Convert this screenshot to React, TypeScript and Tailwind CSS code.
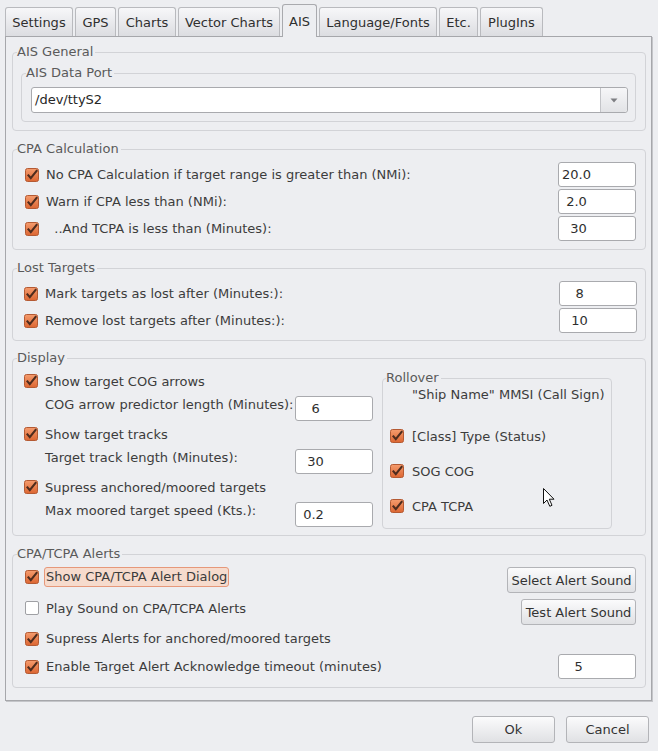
import React from "react";

const Check = ({ on = true }: { on?: boolean }) =>
  on ? (
    <svg width="14" height="14" viewBox="0 0 14 14" className="shrink-0 overflow-visible">
      <defs>
        <linearGradient id="cbFill" x1="0" y1="0" x2="0" y2="1">
          <stop offset="0" stopColor="#f59c6e" />
          <stop offset="1" stopColor="#dc6632" />
        </linearGradient>
      </defs>
      <rect x="0.5" y="0.5" width="13" height="13" rx="2" fill="url(#cbFill)" stroke="#b45a33" />
      <path d="M2.8 6.6 L5.8 10.2 L12.2 2.2" fill="none" stroke="#4e2c1e" strokeWidth="2.1" />
    </svg>
  ) : (
    <span className="block w-[14px] h-[14px] shrink-0 rounded-[2px] border border-[#9fa0a4] bg-white" />
  );

const CheckRow = ({
  label,
  on = true,
  className = "",
}: {
  label: string;
  on?: boolean;
  className?: string;
}) => (
  <div className={`flex items-center gap-[7px] ${className}`}>
    <Check on={on} />
    <span className="whitespace-pre leading-[15px]">{label}</span>
  </div>
);

const Field = ({ value, className = "" }: { value: string; className?: string }) => (
  <div
    className={`w-[78px] h-[25px] shrink-0 bg-white border border-[#a9aaae] rounded-[3px] pl-[3px] leading-[23px] whitespace-pre text-[#2e2e2e] ${className}`}
  >
    {value}
  </div>
);

const Btn = ({ children, className = "" }: { children: React.ReactNode; className?: string }) => (
  <div
    className={`flex items-center justify-center shrink-0 border border-[#b3b4b8] rounded-[3px] bg-linear-to-b from-[#fbfbfc] to-[#e0e1e4] text-[#333] ${className}`}
  >
    {children}
  </div>
);

const Group = ({
  title,
  className = "",
  titleClass = "ml-[4px]",
  children,
}: {
  title: string;
  className?: string;
  titleClass?: string;
  children?: React.ReactNode;
}) => (
  <div className={`border border-[#d2d3d7] rounded-[4px] ${className}`}>
    <div className={`-mt-[9px] ${titleClass} pr-[2px] w-fit h-[15px] leading-[15px] bg-[#edeef1] text-[#5a5a5a]`}>
      {title}
    </div>
    {children}
  </div>
);

const tabs: [string, number][] = [
  ["Settings", 68],
  ["GPS", 41],
  ["Charts", 58],
  ["Vector Charts", 102],
  ["AIS", 35],
  ["Language/Fonts", 118],
  ["Etc.", 39],
  ["PlugIns", 63],
];

const tabWidth: Record<number, string> = {
  68: "w-[68px]",
  41: "w-[41px]",
  58: "w-[58px]",
  102: "w-[102px]",
  35: "w-[35px]",
  118: "w-[118px]",
  39: "w-[39px]",
  63: "w-[63px]",
};

const cpaRows = [
  { label: "No CPA Calculation if target range is greater than (NMi):", value: "20.0" },
  { label: "Warn if CPA less than (NMi):", value: " 2.0" },
  { label: "  ..And TCPA is less than (Minutes):", value: "  30" },
];

const lostRows = [
  { label: "Mark targets as lost after (Minutes:):", value: "   8" },
  { label: "Remove lost targets after (Minutes:):", value: "  10" },
];

const displayBlocks = [
  { check: "Show target COG arrows", label: "COG arrow predictor length (Minutes):", value: "   6" },
  { check: "Show target tracks", label: "Target track length (Minutes):", value: "  30" },
  { check: "Supress anchored/moored targets", label: "Max moored target speed (Kts.):", value: " 0.2" },
];

export default function App() {
  return (
    <div className="relative w-[658px] h-[751px] overflow-hidden bg-[#edeef1] pt-[4px] font-['DejaVu_Sans',sans-serif] text-[13px] leading-[15px] text-[#3c3c3c]">
      {/* tabs */}
      <div className="flex items-end gap-[2px] pl-[5px]">
        {tabs.map(([t, w]) =>
          t === "AIS" ? (
            <div
              key={t}
              className={`relative z-10 -mb-px h-[33px] ${tabWidth[w]} flex items-center justify-center border border-b-0 border-[#a9aaae] rounded-t-[3px] bg-[#edeef1] text-[#2f2f2f]`}
            >
              {t}
            </div>
          ) : (
            <div
              key={t}
              className={`h-[29px] ${tabWidth[w]} flex items-center justify-center border border-b-0 border-[#b9babe] rounded-t-[3px] bg-linear-to-b from-[#f7f7f9] to-[#dcdde1] text-[#2f2f2f]`}
            >
              {t}
            </div>
          )
        )}
      </div>

      {/* notebook page */}
      <div className="ml-[5px] w-[647px] h-[665px] border border-[#a6a7ab] shadow-[1px_1px_0_#c4c5c9] pl-[6px] pr-[5px] pt-[15px]">
        <Group title="AIS General" className="h-[79px]">
          <div className="mt-[14px] ml-[8px] mr-[9px]">
            <Group title="AIS Data Port" className="h-[49px]">
              <div className="mt-[7px] ml-[9px] mr-[7px] h-[26px] flex bg-white border border-[#a9aaae] rounded-[3px]">
                <div className="flex-1 pl-[3px] leading-[24px] text-[#262626]">/dev/ttyS2</div>
                <div className="w-[27px] flex items-center justify-center border-l border-[#c3c4c8] rounded-r-[3px] bg-linear-to-b from-[#f6f6f8] to-[#e2e3e6]">
                  <svg width="8" height="5" viewBox="0 0 8 5">
                    <path d="M0.5 0.5 L7.5 0.5 L4 4.5 Z" fill="#7d7e82" />
                  </svg>
                </div>
              </div>
            </Group>
          </div>
        </Group>

        <Group title="CPA Calculation" className="mt-[18px] h-[101px]">
          <div className="mt-[5px] ml-[12px] mr-[9px] flex flex-col">
            {cpaRows.map((r) => (
              <div key={r.label} className="h-[27px] flex items-center justify-between">
                <CheckRow label={r.label} />
                <Field value={r.value} />
              </div>
            ))}
          </div>
        </Group>

        <Group title="Lost Targets" className="mt-[18px] h-[73px]">
          <div className="mt-[5px] ml-[11px] mr-[8px] flex flex-col">
            {lostRows.map((r) => (
              <div key={r.label} className="h-[27px] flex items-center justify-between">
                <CheckRow label={r.label} />
                <Field value={r.value} />
              </div>
            ))}
          </div>
        </Group>

        <Group title="Display" className="mt-[17px] h-[178px]">
          <div className="flex items-start ml-[11px] mt-[8px]">
            <div className="flex flex-col w-[349px]">
              {displayBlocks.map((b, i) => (
                <div key={b.check} className={i ? "mt-[5px]" : ""}>
                  <CheckRow label={b.check} className="h-[16px]" />
                  <div className="mt-[7px] flex">
                    <span className="w-[271px] pl-[21px] pt-[1px] whitespace-nowrap leading-[15px]">{b.label}</span>
                    <Field value={b.value} />
                  </div>
                </div>
              ))}
            </div>
            <Group title="Rollover" titleClass="ml-[3px]" className="ml-[9px] mt-[5px] w-[230px] h-[151px]">
              <div className="ml-[29px] mt-[2px] leading-[15px]">"Ship Name" MMSI (Call Sign)</div>
              <div className="ml-[7px] mt-[26px] flex flex-col gap-[19px]">
                <CheckRow label="[Class] Type (Status)" className="h-[16px] gap-[8px]" />
                <CheckRow label="SOG COG" className="h-[16px] gap-[8px]" />
                <CheckRow label="CPA TCPA" className="h-[16px] gap-[8px]" />
              </div>
            </Group>
          </div>
        </Group>

        <Group title="CPA/TCPA Alerts" className="mt-[18px] h-[134px]">
          <div className="mt-[6px] ml-[12px] mr-[9px] flex flex-col">
            <div className="h-[26px] flex items-start justify-between">
              <div className="h-[20px] flex items-center">
                <Check />
                <span className="ml-[5px] h-[20px] px-[1px] border border-[#e6987a] bg-[#f6dbcd] rounded-[3px] leading-[18px] whitespace-nowrap">
                  Show CPA/TCPA Alert Dialog
                </span>
              </div>
              <Btn className="w-[129px] h-[26px]">Select Alert Sound</Btn>
            </div>
            <div className="mt-[6px] h-[25px] flex items-start justify-between">
              <CheckRow label="Play Sound on CPA/TCPA Alerts" on={false} className="h-[16px] mt-[1px]" />
              <Btn className="w-[115px] h-[26px]">Test Alert Sound</Btn>
            </div>
            <div className="mt-[6px] h-[17px] flex items-center">
              <CheckRow label="Supress Alerts for anchored/moored targets" />
            </div>
            <div className="mt-[7px] h-[25px] flex items-center justify-between">
              <CheckRow label="Enable Target Alert Acknowledge timeout (minutes)" />
              <Field value="   5" />
            </div>
          </div>
        </Group>
      </div>

      {/* dialog buttons */}
      <div className="mt-[15px] flex justify-end gap-[11px] pr-[9px]">
        <Btn className="w-[83px] h-[27px]">Ok</Btn>
        <Btn className="w-[83px] h-[27px]">Cancel</Btn>
      </div>

      {/* mouse pointer */}
      <svg
        className="absolute left-[543px] top-[488px]"
        width="13"
        height="20"
        viewBox="0 0 13 20"
      >
        <path
          d="M0.5 0.5 L0.5 15.5 L4 12 L6.8 18.3 L9 17.3 L6.3 11.2 L11 11.2 Z"
          fill="#fff"
          stroke="#111"
          strokeWidth="1"
          strokeLinejoin="miter"
        />
      </svg>
    </div>
  );
}
